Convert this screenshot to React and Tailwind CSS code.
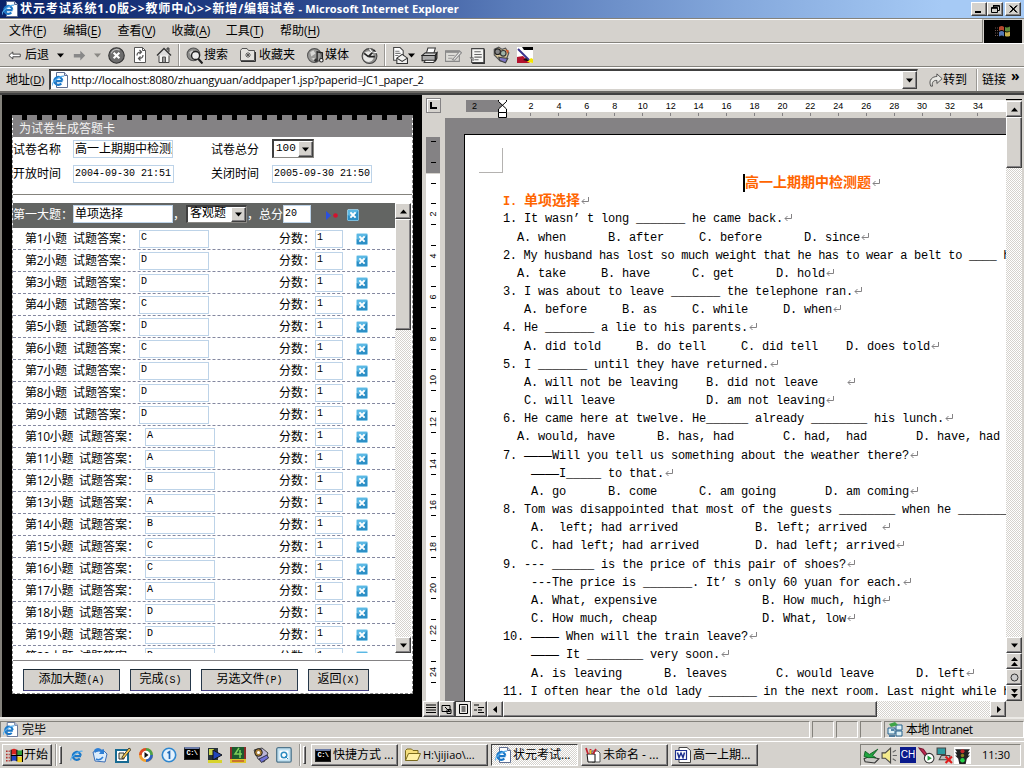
import React from "react";

const RAISED = "border border-t-white border-l-white border-r-[#404040] border-b-[#404040] bg-[#d5d2cd] shadow-[inset_-1px_-1px_0_#848284]";
const TRACK = "bg-[repeating-conic-gradient(#ffffff_0_25%,#d5d2cd_0_50%)] bg-[length:2px_2px]";
const SONG = "font-['Liberation_Mono','Noto_Sans_CJK_SC',monospace]";

function Icon({ s = 16, className = "", children }) {
  return (
    <svg width={s} height={s} viewBox="0 0 16 16" className={"shrink-0 " + className}>
      {children}
    </svg>
  );
}

function Tri({ dir = "down", color = "#000" }) {
  const d = { down: "M0 0h7L3.5 4z", up: "M0 4h7L3.5 0z", left: "M5 0v7L1 3.5z", right: "M2 0v7L6 3.5z" }[dir];
  return (
    <svg width="7" height="7" viewBox={dir === "down" || dir === "up" ? "0 -1.5 7 7" : "0 0 7 7"} className="shrink-0">
      <path d={d} fill={color} />
    </svg>
  );
}

function EMark() {
  return (
    <g fill="none">
      <path d="M12 9.2H5.2M11.8 8.6a4 4 0 1 0-1 3" stroke="#1b78c8" strokeWidth="2.2" />
      <path d="M2 13.5C.5 11 9 3.5 13.6 4.2" stroke="#5ab0ee" strokeWidth="1.1" />
    </g>
  );
}

function IEPage({ s = 16 }) {
  return (
    <Icon s={s}>
      <path d="M4.5.5h8l3 3v12h-11z" fill="#fff" stroke="#5f6f92" />
      <path d="M12.5.5v3h3" fill="#cfdcf4" stroke="#5f6f92" />
      <g transform="translate(-1.5 0)"><EMark /></g>
    </Icon>
  );
}

function Sep({ className = "" }) {
  return <div className={"h-[22px] w-[2px] shrink-0 border-l border-r border-l-[#9a9894] border-r-white " + className} />;
}

function TitleBar() {
  return (
    <header className="flex h-[18px] shrink-0 items-center bg-[linear-gradient(90deg,#0a246a_0%,#264288_28%,#5a7cba_50%,#84a8dc_72%,#a6caf5_92%)] pl-[2px] pr-[3px]">
      <IEPage />
      <div className="ml-[2px] w-[470px] whitespace-nowrap font-['Noto_Sans','Noto_Sans_CJK_SC',sans-serif] text-[12px] font-bold leading-[18px] text-white">
        <span className="tracking-[0.88px]">状元考试系统1.0版&gt;&gt;教师中心&gt;&gt;新增/编辑试卷</span>
        <span className="text-[11px] tracking-[0.13px]"> - Microsoft Internet Explorer</span>
      </div>
      <div className="ml-auto flex">
        {["M3 10.5h6M3 9.5h6", "M5.5 3.5h6v5h-2M5.5 3v2M5.5 4.2h6M3.5 5.5h6v5h-6zM3.5 6.3h6", "M3.5 3.5l7 7M10.5 3.5l-7 7M4.3 3.5l7 7M11.3 3.5l-7 7"].map((d, i) => (
          <div key={i} className={"flex h-[14px] w-[16px] items-center justify-center " + RAISED + (i === 2 ? " ml-[2px]" : "")}>
            <svg width="14" height="12" viewBox="0 1 14 12"><path d={d} stroke="#000" fill="none" /></svg>
          </div>
        ))}
      </div>
    </header>
  );
}

function MenuBar() {
  const items = [["文件", "F"], ["编辑", "E"], ["查看", "V"], ["收藏", "A"], ["工具", "T"], ["帮助", "H"]];
  return (
    <nav className="flex h-[25px] shrink-0 border-t border-[#84827c]">
      <div className="flex flex-1 items-center border-b border-r border-t border-b-[#84827c] border-r-[#84827c] border-t-white pl-[9px]">
        {items.map(([t, k]) => (
          <div key={k} className="w-[54.2px] whitespace-nowrap">
            {t}<span className="text-[12px]">(<u className="underline-offset-[2px]">{k}</u>)</span>
          </div>
        ))}
      </div>
      <div className="ml-px mr-[2px] mt-px flex w-[38px] items-center justify-center bg-black">
        <svg width="18" height="16" viewBox="0 0 18 16">
          <path d="M5 3q3-2 5 0v4q-2-2-5 0z" fill="#b5482e" />
          <path d="M11 3q2 1 5-.5V7q-3 1-5 0z" fill="#5d8a3c" />
          <path d="M5 8q3-2 5 0v4.500q-2-2-5 0z" fill="#5577b4" />
          <path d="M11 8q2 1 5-.5V12q-3 1-5 0z" fill="#c9b04b" />
          <path d="M1 4h3M1 6.500h3M1 9h3M1 11.500h3" stroke="#6b5550" strokeDasharray="1 1" />
        </svg>
      </div>
    </nav>
  );
}

function Toolbar() {
  return (
    <div className="flex h-[24px] shrink-0 items-center border-b border-t border-b-[#84827c] border-t-white pl-[8px] pr-[2px]">
      <Icon s={14}><path d="M1 8.500l4.500-4v2.500H14v3H5.500v2.500z" fill="#fff" stroke="#333" /></Icon>
      <span className="ml-[3px] w-[24px]">后退</span>
      <div className="ml-[8px]"><Tri /></div>
      <Icon s={13} className="ml-[9px]"><path d="M15 8l-6-6v4H1v4.500h8V14z" fill="#888" /></Icon>
      <div className="ml-[8px]"><Tri color="#8a8884" /></div>
      <Icon s={17} className="ml-[7px]">
        <circle cx="8" cy="8" r="7.300" fill="#6c6c6c" stroke="#333" />
        <path d="M3 6a5.500 5.500 0 0 1 8-3" stroke="#bbb" fill="none" />
        <path d="M5.300 5.300l5.400 5.400M10.700 5.300l-5.400 5.400" stroke="#fff" strokeWidth="2" />
      </Icon>
      <Icon className="ml-[7px]">
        <path d="M2.500.5h8l3 3v12h-11z" fill="#fff" stroke="#555" /><path d="M10.500.5v3h3" stroke="#555" fill="none" />
        <path d="M5 8.500C5 5.500 7 5 9 5M7.500 3l2 2-2 2M11 8c0 3-2 3.500-4 3.500M8.500 9.500l-2 2 2 2" stroke="#555" strokeWidth="1.200" fill="none" />
      </Icon>
      <Icon className="ml-[8px]">
        <path d="M11 3V1h2v4" fill="#777" stroke="#444" /><path d="M3 8v7.500h10V8" fill="#f4f4f2" stroke="#444" />
        <path d="M1 8.500l7-7 7 7" fill="#ddd" stroke="#333" strokeWidth="1.400" /><path d="M6.500 15v-5h3v5" fill="#999" stroke="#555" />
      </Icon>
      <Sep className="ml-[6px]" />
      <Icon s={17} className="ml-[6px]">
        <circle cx="7" cy="7" r="6" fill="#8d8d8b" stroke="#555" /><path d="M3 5l3-2 2 3-3 3z" fill="#ccc" />
        <circle cx="9" cy="8" r="3.800" fill="#ececec" stroke="#222" strokeWidth="1.300" /><path d="M11.500 11l4 4.500" stroke="#222" strokeWidth="2" />
      </Icon>
      <span className="ml-px w-[24px]">搜索</span>
      <Icon className="ml-[12px]">
        <path d="M.5 13.500v-10l1.500-2h5l1.500 2h6v10z" fill="#e3e2de" stroke="#555" /><path d="M1 14.500h14.500V5" stroke="#333" fill="none" />
        <path d="M8 5v6M5 8h6M6 6l4 4M10 6l-4 4" stroke="#555" strokeWidth=".9" />
      </Icon>
      <span className="ml-[3px] w-[36px]">收藏夹</span>
      <Icon s={17} className="ml-[12px]">
        <circle cx="7" cy="8" r="6.500" fill="#9a9a98" stroke="#555" /><path d="M3 5l3-2 2 3-4 3zM4 11l3-1 1 3z" fill="#d8d8d6" />
        <path d="M9.500 12V4.500l5 1V12" stroke="#222" fill="none" strokeWidth="1.200" /><circle cx="8.500" cy="12.500" r="1.700" fill="#333" /><circle cx="13.500" cy="12.500" r="1.700" fill="#fff" stroke="#222" />
      </Icon>
      <span className="ml-px w-[24px]">媒体</span>
      <Icon s={17} className="ml-[12px]">
        <circle cx="8" cy="8.500" r="7" fill="#8f8f8d" stroke="#444" /><circle cx="7" cy="9" r="5" fill="#e8e8e6" />
        <path d="M7 9l6-6M7 9h6M7 9L3 6" stroke="#222" strokeWidth="1.600" /><path d="M8 1.500l2 3 5 1" stroke="#fff" fill="none" />
      </Icon>
      <Sep className="ml-[6px]" />
      <Icon s={17} className="ml-[5px]">
        <path d="M2.500.5h6l3 3v9h-9z" fill="#fff" stroke="#444" /><path d="M4 4h4M4 6h5M4 8h3" stroke="#777" />
        <path d="M5.500 10.500l5-3.500 5 3.500v5h-10z" fill="#f2f2f0" stroke="#333" /><path d="M5.500 10.500l5 3 5-3" fill="none" stroke="#333" />
      </Icon>
      <div><Tri /></div>
      <Icon s={17} className="ml-[6px]">
        <path d="M5 6l1.500-5h7L12 6" fill="#fff" stroke="#333" /><path d="M1 8l3-2.500h11L13.500 8z" fill="#ccc" stroke="#333" />
        <path d="M1 8h12.500v5H1z" fill="#aaa" stroke="#222" /><path d="M13.500 8L15 5.500v5l-1.500 3z" fill="#666" stroke="#222" /><path d="M3 14.500h9l1-2H4z" fill="#fff" stroke="#333" />
      </Icon>
      <Icon s={17} className="ml-[7px]">
        <path d="M.5 3.500h13v10H.5z" fill="#dcdbd7" stroke="#888" /><path d="M1 4.500h12" stroke="#8a8a8a" strokeWidth="2" />
        <path d="M3 8h6M3 10.500h4" stroke="#999" /><path d="M7 12l7-8 1.500 1.500-6.500 7z" fill="#eee" stroke="#888" />
      </Icon>
      <Icon s={17} className="ml-[7px]">
        <path d="M2.500 1.500h11.500v13H2.500z" fill="#f6f6f4" stroke="#444" /><path d="M14.500 2v13.500H3" stroke="#333" fill="none" /><path d="M5 4.500h6M5 7h7M5 9.500h7M5 12h4" stroke="#666" />
        <path d="M1 10h3v3z" fill="#bbb" stroke="#555" strokeWidth=".6" />
      </Icon>
      <Icon s={18} className="ml-[6px]">
        <path d="M2 3l4-2 3 2 3-1 3 4-3 8-5-1-5-5z" fill="#d8c79a" stroke="#555" /><circle cx="5" cy="5" r="2.500" fill="#888" stroke="#222" /><circle cx="10" cy="6.500" r="2.500" fill="#9fb3a8" stroke="#333" />
        <path d="M6 10l8 1-2 4-5-2z" fill="#7f76c8" stroke="#444" /><path d="M12 3l3 1-1 3z" fill="#d4582f" />
      </Icon>
      <Icon s={16} className="ml-[7px]">
        <rect width="16" height="16" fill="#fff" /><path d="M5 0h11v3H7z" fill="#000" /><path d="M0 10l6-1 7 7H0z" fill="#b3122e" />
        <path d="M1 2l12 12" stroke="#39348f" strokeWidth="2" /><path d="M10 15l4-4 2 1v4z" fill="#f5e600" /><path d="M9 11l3 3h-2l-4-1z" fill="#111" />
      </Icon>
    </div>
  );
}

function AddressBar() {
  return (
    <div className="flex h-[26px] shrink-0 items-center border-b-2 border-t border-b-[#6a6864] border-t-white pl-[6px] pr-[2px]">
      <span className="w-[43px] whitespace-nowrap">地址<span className="text-[11px]">(<u>D</u>)</span></span>
      <div className="flex h-[21px] w-[869px] items-center border-2 border-b border-r border-b-[#d5d2cd] border-l-[#404040] border-r-[#d5d2cd] border-t-[#404040] bg-white pl-px">
        <IEPage />
        <span className="ml-[3px] flex-1 whitespace-nowrap text-[11px] tracking-[-0.17px]">http://localhost:8080/zhuangyuan/addpaper1.jsp?paperid=JC1_paper_2</span>
        <div className={"flex h-[18px] w-[15px] items-center justify-center " + RAISED}><Tri /></div>
      </div>
      <Icon s={14} className="ml-[11px]">
        <path d="M2 15C-1 8 4 4 9 4V1l6 5.500L9 12V8.500C5 8 3 11 4 15z" fill="#e8e8e4" stroke="#444" />
      </Icon>
      <span className="w-[26px]">转到</span>
      <Sep className="ml-[7px]" />
      <span className="ml-[4px]">链接</span>
      <span className="ml-[5px] -translate-y-[4px] text-[14px] font-bold leading-none">»</span>
    </div>
  );
}

function DeleteIcon({ s = 12 }) {
  return (
    <Icon s={s}>
      <rect x=".5" y=".5" width="15" height="15" rx="2" fill="#5bb8e4" stroke="#b6e0f4" />
      <path d="M1 15V8q7 4 14-6v13z" fill="#2c8fc6" />
      <path d="M4.500 4.500l7 7M11.500 4.500l-7 7" stroke="#fff" strokeWidth="2.600" />
    </Icon>
  );
}

const FIELD = "h-[18px] shrink-0 overflow-hidden whitespace-nowrap border border-[#bdd3e8] bg-white text-black ";

function Question({ n, a }) {
  return (
    <div className="flex h-[22px] items-center border-b border-dashed border-[#8488a0] pl-[12px]">
      <span className={n > 9 ? "w-[54px] tracking-[-0.3px]" : "w-[48px] tracking-[-0.3px]"}>第{n}小题</span>
      <span className="w-[66px] whitespace-nowrap">试题答案：</span>
      <div className={FIELD + SONG + " w-[70px] pl-px text-[10px] leading-[14px]"}>{a}</div>
      <span className={(n > 9 ? "ml-[64px]" : "ml-[70px]") + " w-[36px] whitespace-nowrap"}>分数：</span>
      <div className={FIELD + SONG + " w-[28px] pl-px text-[10px] leading-[14px]"}>1</div>
      <div className="ml-[13px]"><DeleteIcon /></div>
    </div>
  );
}

function Select({ children, w, arrowH }) {
  return (
    <div className={"flex items-start border-2 border-b border-r border-b-[#8a8884] border-l-[#404040] border-r-[#8a8884] border-t-[#404040] bg-white text-black " + SONG + " " + w}>
      <span className="flex-1 whitespace-nowrap pl-[2px] leading-[14px]">{children}</span>
      <div className={"flex w-[15px] items-center justify-center " + arrowH + " " + RAISED}><Tri /></div>
    </div>
  );
}

const ANSWERS = "CDDCDCDDDAABABCCADDD".split("");

function AnswerCard() {
  return (
    <section className="w-[422px] shrink-0 border-l-2 border-[#84827c] bg-black pl-[10px] pt-[20px]">
      <div className="flex h-[579px] w-[401px] flex-col border border-t-0 border-dashed border-[#8a8a8a] bg-white">
        <div className="h-[5px] shrink-0 bg-[repeating-linear-gradient(90deg,#848284_0_9px,#000_9px_14px,#848284_14px_15px)]" />
        <div className="h-[17px] shrink-0 bg-[#848284] pl-[6px] leading-[17px] text-[#f3f3f3]">为试卷生成答题卡</div>
        <div className="grid shrink-0 grid-cols-[60px_138px_61px_1fr] pt-[3px]">
          <span className="h-[19px] pt-[2px]">试卷名称</span>
          <div className={FIELD + "w-[100px] pl-px leading-[15px]"}>高一上期期中检测题</div>
          <span className="pt-[2px]">试卷总分</span>
          <div className="-mt-px h-[19px]"><Select w="w-[42px] h-[19px]" arrowH="h-[16px]"><span className="text-[11px]">100</span></Select></div>
          <span className="pt-[7px]">开放时间</span>
          <div className={FIELD + SONG + " mt-[6px] w-[101px] pl-px text-[10px] leading-[16px]"}>2004-09-30 21:51</div>
          <span className="pt-[7px]">关闭时间</span>
          <div className={FIELD + SONG + " mt-[6px] w-[100px] pl-px text-[10px] leading-[16px]"}>2005-09-30 21:50</div>
        </div>
        <div className="mt-[11px] h-[2px] shrink-0 border-t border-[#84827c]" />
        <div className="mt-[7px] flex h-[450px] shrink-0">
          <div className="w-[382px] shrink-0 overflow-hidden">
            <div className="flex h-[25px] bg-[#636563] pt-[2px] text-white">
              <span className="w-[60px] whitespace-nowrap pt-[2px]">第一大题：</span>
              <div className={FIELD + "w-[100px] pl-px leading-[15px]"}>单项选择</div>
              <span className="w-[13px] pt-[2px]">，</span>
              <Select w="w-[61px] h-[18px]" arrowH="h-[15px]"><span className="text-[12px]">客观题</span></Select>
              <span className="w-[12px] pt-[2px]">，</span>
              <span className="w-[24px] pt-[2px]">总分</span>
              <div className={FIELD + SONG + " w-[28px] pl-px text-[10px] leading-[15px]"}>20</div>
              <svg width="13" height="9" viewBox="0 0 13 9" className="ml-[14px] mt-[6px] shrink-0"><path d="M1 0l5 4.500L1 9z" fill="#2a4fe0" /><circle cx="10.500" cy="4.500" r="2.300" fill="#d3122e" /></svg>
              <div className="ml-[9px] mt-[4px]"><DeleteIcon /></div>
            </div>
            {ANSWERS.map((a, i) => <Question key={i} n={i + 1} a={a} />)}
          </div>
          <div className={"flex w-[16px] flex-col " + TRACK}>
            <div className={"flex h-[16px] items-center justify-center " + RAISED}><Tri dir="up" /></div>
            <div className={"h-[111px] " + RAISED} />
            <div className={"mt-auto flex h-[16px] items-center justify-center " + RAISED}><Tri /></div>
          </div>
        </div>
        <div className="mt-[7px] h-px shrink-0 bg-[#848284]" />
        <div className="mt-[8px] flex gap-[10px] pl-[10px]">
          {[["添加大题", "A", "w-[97px]"], ["完成", "S", "w-[61px]"], ["另选文件", "P", "w-[97px]"], ["返回", "X", "w-[61px]"]].map(([t, k, w]) => (
            <button key={k} className={"h-[22px] whitespace-nowrap border border-b-[#4a4488] border-l-[#26384a] border-r-[#26384a] border-t-[#1c2a35] bg-[#d5d2cd] pb-[2px] text-[12px] leading-[18px] text-black " + w}>
              {t}<span className={SONG + " text-[10px]"}>({k})</span>
            </button>
          ))}
        </div>
      </div>
    </section>
  );
}

const LINES = [
  "1. It wasn’ t long _______ he came back.↵",
  "  A. when      B. after     C. before      D. since↵",
  "~2. My husband has lost so much weight that he has to wear a belt to ____ h",
  "  A. take     B. have      C. get      D. hold↵",
  "3. I was about to leave _______ the telephone ran.↵",
  "   A. before     B. as     C. while     D. when↵",
  "4. He _______ a lie to his parents.↵",
  "   A. did told     B. do tell     C. did tell    D. does told↵",
  "5. I _______ until they have returned.↵",
  "   A. will not be leaving    B. did not leave    ↵",
  "   C. will leave             D. am not leaving↵",
  "6. He came here at twelve. He______ already ________ his lunch.↵",
  "  A. would, have      B. has, had       C. had,  had       D. have, had",
  "7. ——Will you tell us something about the weather there?↵",
  "    ——I_____ to that.↵",
  "    A. go      B. come      C. am going       D. am coming↵",
  "8. Tom was disappointed that most of the guests ________ when he ________",
  "    A.  left; had arrived           B. left; arrived  ↵",
  "    C. had left; had arrived        D. had left; arrived↵",
  "9. --- ______ is the price of this pair of shoes?↵",
  "    ---The price is _______. It’ s only 60 yuan for each.↵",
  "    A. What, expensive               B. How much, high↵",
  "    C. How much, cheap               D. What, low↵",
  "10. —— When will the train leave?↵",
  "    —— It ________ very soon.↵",
  "    A. is leaving      B. leaves       C. would leave      D. left↵",
  "~11. I often hear the old lady _______ in the next room. Last night while h",
];

function Return() {
  return (
    <svg width="8" height="8" viewBox="0 0 8 8" className="ml-px inline-block align-[0px]">
      <path d="M7.500 0v4.500H1M3.500 2L1 4.500 3.500 7" fill="none" stroke="#848284" />
    </svg>
  );
}

function Line({ text }) {
  const tight = text[0] === "~";
  const parts = text.replace("~", "").split(/(——|↵)/);
  return (
    <div className={"h-[18.18px] whitespace-pre leading-[18px] " + (tight ? "tracking-[-0.35px]" : "tracking-[-0.201px]")}>
      {parts.map((p, i) =>
        p === "↵" ? <Return key={i} /> :
        p === "——" ? <span key={i} className="inline-block w-[28px] align-top font-['Liberation_Sans'] text-[14px] leading-[17px] tracking-normal">——</span> : p
      )}
    </div>
  );
}

function HRuler() {
  const nums = Array.from({ length: 17 }, (_, i) => (i + 1) * 2);
  return (
    <div className="flex h-[23px] pt-[3px]">
      <div className="ml-[3px] flex h-[15px] w-[15px] items-center justify-center border border-[#848284] shadow-[inset_1px_1px_0_#fff]">
        <svg width="7" height="7"><path d="M1 0v6h6" stroke="#000" strokeWidth="2" fill="none" /></svg>
      </div>
      <div className="ml-[25px] mt-[2px] flex h-[20px] flex-1 overflow-hidden text-[9px] leading-[12px]">
        <div className="h-[12px] w-[36px] bg-[#848284] pl-[6px]">2</div>
        <div className="relative h-[12px] flex-1 bg-white pl-[15px]">
          <svg width="9" height="22" viewBox="0 0 9 22" className="absolute -left-[4px] -top-[2px]">
            <path d="M.5.5h8v3L.5 11v3.500h8V11L.5 3.500z" fill="#fff" stroke="#000" /><path d="M.5 14.500h8v5h-8z" fill="#fff" stroke="#000" />
          </svg>
          <div className="flex">
            {nums.map((n) => (
              <div key={n} className="flex w-[27.95px] shrink-0 flex-col items-center">
                <span>{n}</span><span className="mt-[1px] h-[3px] w-px bg-[#848284]" />
              </div>
            ))}
          </div>
        </div>
      </div>
    </div>
  );
}

function VRuler() {
  const nums = Array.from({ length: 12 }, (_, i) => (i + 1) * 2);
  return (
    <div className="w-[22px] shrink-0 overflow-hidden pl-[3px] pt-[19px]">
      <div className="flex h-[36px] w-[14px] flex-col items-center gap-[20px] bg-[#848284] pt-[4px]">
        <i className="h-px w-[5px] bg-black" /><i className="h-px w-[5px] bg-black" />
      </div>
      <div className="mt-px flex h-[529px] w-[14px] flex-col items-center bg-white pt-[9px] text-[9px]">
        <i className="mb-[19px] h-px w-[5px] shrink-0 bg-black" />
        {nums.map((n) => (
          <div key={n} className="flex h-[41.6px] shrink-0 flex-col items-center">
            <i className="h-px w-[5px] bg-black" />
            <span className="flex h-[20px] w-[14px] -rotate-90 items-center justify-center leading-none">{n}</span>
            <i className="h-px w-[5px] bg-black" />
          </div>
        ))}
      </div>
    </div>
  );
}

function SideBtn({ children, h = "h-[16px]" }) {
  return <div className={"flex w-[16px] shrink-0 items-center justify-center " + h + " " + RAISED}>{children}</div>;
}

function WordPane() {
  return (
    <section className="flex min-w-0 flex-1 bg-[#d5d2cd] pl-px">
      <div className="flex w-[583px] shrink-0 flex-col font-['Liberation_Sans',sans-serif]">
        <HRuler />
        <div className="flex h-[584px] overflow-hidden">
          <VRuler />
          <div className="min-w-0 flex-1 overflow-hidden bg-[#848284] pl-[19px] pt-[16px]">
            <div className="h-[568px] border-l border-t border-black bg-white pl-[14px] pt-[13px]">
              <div className="mb-px h-[25px] w-[24px] border-b border-r border-[#b4b2b0]" />
              <div className={"w-[800px] pl-[24px] text-[12px] " + SONG}>
                <div className="flex h-[18.180px] items-center whitespace-nowrap pl-[240px] text-[14px] font-bold text-[#ff6500]">
                  <span className="h-[18px] w-[2px] bg-black" />高一上期期中检测题<Return />
                </div>
                <div className="h-[18.180px] whitespace-pre text-[14px] font-bold leading-[18px] tracking-[0px] text-[#ff6500]">
                  <span className="text-[12px] tracking-[-0.2px]">I. </span>单项选择<Return />
                </div>
                {LINES.map((l, i) => <Line key={i} text={l} />)}
              </div>
            </div>
          </div>
        </div>
        <div className="flex h-[16px]">
          {["M1 2h10M1 4.500h10M1 7h10M1 9.500h10", "M1 2.500h8v6H1zM6 6.500h4v4H6zM4 4l4 4", "M2.500 1.500h8v9h-8zM4.500 4h4M4.500 6h4M4.500 8h4", "M1 2h5M5 4.500h6M1 7h3M5 7h4M5 9.500h6"].map((d, i) => (
            <div key={i} className={"flex w-[16px] items-center justify-center " + (i === 2 ? "border border-[#404040] bg-[#eeece8]" : RAISED)}>
              <svg width="12" height="12" className="shrink-0"><path d={d} stroke="#000" fill="none" /></svg>
            </div>
          ))}
          <SideBtn><Tri dir="left" /></SideBtn>
          <div className={"w-[374px] " + RAISED} />
          <div className={"flex-1 " + TRACK} />
          <SideBtn><Tri dir="right" /></SideBtn>
        </div>
      </div>
      <div className="flex w-[16px] flex-col">
        <div className="h-[5px] border-b border-black" />
        <SideBtn h="h-[16px] mt-px"><Tri dir="up" /></SideBtn>
        <div className={"h-[51px] shrink-0 " + RAISED} />
        <div className={"flex-1 " + TRACK} />
        <SideBtn><Tri /></SideBtn>
        <SideBtn><svg width="7" height="9"><path d="M0 4h7L3.500 0zM0 9h7L3.500 5z" /></svg></SideBtn>
        <SideBtn><svg width="9" height="9"><circle cx="4.500" cy="4.500" r="3.500" fill="#ccc" stroke="#333" /></svg></SideBtn>
        <SideBtn><svg width="7" height="9"><path d="M0 0h7L3.500 4zM0 5h7L3.500 9z" /></svg></SideBtn>
        <div className="h-[16px]" />
      </div>
    </section>
  );
}

const SUNK = "border border-b-white border-l-[#84827c] border-r-white border-t-[#84827c]";

function StatusBar() {
  return (
    <div className="flex h-[24px] shrink-0 gap-[2px] border-t-2 border-t-[#eceae6] pb-[3px] pt-[2px]">
      <div className={"flex w-[810px] items-center pl-[2px] " + SUNK}><IEPage s={15} /><span className="ml-[4px]">完毕</span></div>
      <div className={"w-[22px] " + SUNK} /><div className={"w-[22px] " + SUNK} /><div className={"w-[22px] " + SUNK} />
      <div className={"flex flex-1 items-center whitespace-nowrap pl-[2px] " + SUNK}>
        <Icon s={16}>
          <path d="M1 6h7v6H1zM9 3h6v5H9zM9 9h6v5H9z" fill="#dff1f5" stroke="#27638f" /><path d="M2 2l6-2 3 3-7 2z" fill="#3fa447" /><path d="M2 14h6M4 8h3" stroke="#27638f" strokeWidth="1.500" />
        </Icon>
        <span className="ml-[3px] tracking-[-0.5px]">本地 Intranet</span>
      </div>
    </div>
  );
}

function WinFlag() {
  return (
    <Icon s={17}>
      <path d="M5 2.500q2.500-1.500 5 0v5q-2.500-1.500-5 0z" fill="#d8231f" /><path d="M10.500 2.800q2.500 1.200 5 0v5q-2.500 1.200-5 0z" fill="#2f9e3a" />
      <path d="M5 8.500q2.500-1.500 5 0v5q-2.500-1.500-5 0z" fill="#1e43c4" /><path d="M10.500 8.800q2.500 1.200 5 0v5q-2.500 1.200-5 0z" fill="#f0cf1d" />
      <path d="M10.200 2.500v11M5 8h10.500M4.800 2.500v11M15.500 2.500v11.500" stroke="#000" fill="none" /><path d="M0 4h3.500M0 7h3.500M0 10h3.500M0 13h3.500" stroke="#b0302a" strokeWidth="1.500" strokeDasharray="1.500 1" />
    </Icon>
  );
}

function CmdIcon({ className = "" }) {
  return (
    <div className={"h-[13px] w-[16px] shrink-0 overflow-hidden border border-t-2 border-[#222] border-t-[#6b7ca8] bg-black text-center font-['Liberation_Mono',monospace] text-[7px] font-bold leading-[9px] tracking-[-0.500px] text-white " + className}>C:\</div>
  );
}

function Task({ icon, active, children }) {
  return (
    <div className={"flex h-[22px] w-[87px] shrink-0 items-center overflow-hidden whitespace-nowrap pl-[3px] " + (active ? "border border-b-white border-l-[#404040] border-r-white border-t-[#404040] " + TRACK : RAISED)}>
      {icon}<span className="ml-[2px]">{children}</span>
    </div>
  );
}

function Taskbar() {
  return (
    <footer className="flex h-[27px] shrink-0 items-center border-t border-white pl-[2px] pr-[3px]">
      <div className={"flex h-[22px] w-[50px] items-center whitespace-nowrap pl-[3px] " + RAISED}><WinFlag /><span className="ml-px">开始</span></div>
      <Sep className="ml-[3px]" /><div className={"ml-[2px] h-[18px] w-[3px] " + RAISED} />
      <div className="ml-[7px] flex w-[230px] items-center gap-[7px]">
        <Icon><EMark /></Icon>
        <Icon><path d="M1 5l10-2 4 4-2 8-10-1z" fill="#dcecfb" stroke="#3d6fb5" /><path d="M2 3q4-4 8 0l2-1v5H7l1.500-2Q6 3 3 6z" fill="#2d7fd6" /><path d="M4 12q4 2 7-2" stroke="#2d7fd6" strokeWidth="1.500" fill="none" /></Icon>
        <Icon><path d="M1 3h12v12H1z" fill="#fff" stroke="#176a92" strokeWidth="2" /><path d="M4 6h5v6H4z" fill="#e9e3c1" stroke="#333" /><path d="M7 10l7-9 2 1.500-7 8.500-2 .5z" fill="#f3c64b" stroke="#222" strokeWidth=".8" /></Icon>
        <Icon><circle cx="8" cy="8" r="7" fill="#f2a02c" /><path d="M8 1a7 7 0 0 1 7 7H8z" fill="#4ba14c" /><path d="M15 8a7 7 0 0 1-7 7V8z" fill="#2f63be" /><path d="M1 8a7 7 0 0 1 7-7v7z" fill="#da4a27" /><circle cx="8" cy="8" r="4.200" fill="#fff" /><path d="M6.500 5l4 3-4 3z" fill="#111" /></Icon>
        <Icon><circle cx="8" cy="8" r="6.700" fill="#e4f2fd" stroke="#2f87cf" strokeWidth="1.600" /><path d="M6.500 6L8.500 4.800V12" stroke="#1f6ab8" strokeWidth="1.700" fill="none" /></Icon>
        <CmdIcon className="-mt-[3px]" />
        <Icon><path d="M1 1h10v14H1z" fill="#27323a" /><path d="M2 2h5v6H2z" fill="#c8d44a" /><path d="M6 3l9 5-9 5z" fill="#2145b8" stroke="#111" /><path d="M1 13h14v3H1z" fill="#d8d32c" /></Icon>
        <Icon><path d="M0 0h16v12H0z" fill="#1c5b2e" /><path d="M1 0v12M15 0v12" stroke="#8d2a2a" strokeWidth="2" /><path d="M9 1L5 7h7M10 3v8" stroke="#7fd05a" strokeWidth="1.500" fill="none" /><path d="M0 12h16v4H0z" fill="#e0c62a" /><path d="M2 14h12" stroke="#b5252f" /></Icon>
        <Icon><path d="M1 3l8-2 6 5-4 9-6-3z" fill="#b9b4d6" stroke="#444" /><circle cx="5.500" cy="5.500" r="3.800" fill="#a87d34" stroke="#222" /><circle cx="5.500" cy="5.500" r="1.500" fill="#fff" /><path d="M6 12l8-4 1.500 3-7 4.500z" fill="#6f72d8" stroke="#334" /></Icon>
        <Icon><rect x=".7" y=".7" width="14.500" height="14.500" rx="1.500" fill="#bfe0f1" stroke="#51768c" strokeWidth="1.300" /><path d="M3.500 3.500h9v9h-9z" fill="#fff" /><circle cx="8" cy="8" r="2.800" fill="none" stroke="#2f8cc0" strokeWidth="1.500" /><path d="M9 9l3 3" stroke="#2f8cc0" /></Icon>
      </div>
      <Sep /><div className={"ml-[2px] h-[18px] w-[3px] " + RAISED} />
      <div className="ml-[5px] flex gap-[3px]">
        <Task icon={<CmdIcon />}>快捷方式 ...</Task>
        <Task icon={<Icon><path d="M.5 13.500v-10L2 2h4.500L8 3.500h5v3" fill="#f5df7d" stroke="#7a6a1d" /><path d="M.5 13.500l3-7h12l-3 7z" fill="#fff1a6" stroke="#7a6a1d" /></Icon>}><span className="text-[11px]">H:\jijiao\...</span></Task>
        <Task active icon={<IEPage />}>状元考试...</Task>
        <Task icon={<Icon><path d="M7 4h6l2 2v9H7z" fill="#fff" stroke="#555" /><path d="M2 7h8v8H3z" fill="#fff" stroke="#111" /><path d="M3 7L1 1M5.500 7V2M8 7l3-5" stroke="#c3202f" strokeWidth="1.800" /><path d="M5.500 7V3" stroke="#e5c322" strokeWidth="1.500" /></Icon>}>未命名 - ...</Task>
        <Task icon={<Icon><path d="M4 .5h8l3.500 3v12H4z" fill="#fff" stroke="#444" /><path d="M.5 3.500h11v9H.5z" fill="#fff" stroke="#1c2f8e" strokeWidth="1.200" /><path d="M2.500 5.500l1.500 5 2-4.500 2 4.500 1.500-5" stroke="#1c2f8e" strokeWidth="1.500" fill="none" /></Icon>}>高一上期...</Task>
      </div>
      <div className={"ml-auto flex h-[22px] w-[161px] items-center gap-px pl-[2px] " + SUNK}>
        <Icon s={17}><path d="M1 11l5-2 9 2-4 4-9-1z" fill="#c9c9c5" stroke="#333" /><path d="M2 4l4 3 8-5-5 6 3 2H5L1 9z" fill="#21a541" stroke="#0d5a20" strokeWidth=".8" /></Icon>
        <Icon s={17}><path d="M1 5.500h3L9 1v14L4 10.500H1z" fill="#f4ea8c" stroke="#444" /><path d="M11 5l3-2M11 8h4M11 11l3 2" stroke="#666" /></Icon>
        <div className="ml-px h-[16px] w-[16px] shrink-0 bg-[#0a1a8c] text-center font-['Liberation_Sans',sans-serif] text-[10px] leading-[16px] text-white">CH</div>
        <Icon s={17} className="ml-px"><path d="M1 1l4 1 5 7-2 1z" fill="#c22a50" stroke="#7c1733" /><circle cx="10.500" cy="10.500" r="4.500" fill="#fff" stroke="#333" /><path d="M9 8l4 2.500L9 13z" fill="#1e9c3c" /></Icon>
        <Icon s={17}><path d="M1 1h8v6H1z" fill="#2d9aa0" stroke="#444" /><path d="M5 8h8v4H3z" fill="#bbb" stroke="#444" /><path d="M9 9l6 6M15 9l-6 6" stroke="#e01b1b" strokeWidth="2" /></Icon>
        <Icon s={17}><rect width="16" height="16" fill="#fff" /><path d="M1 2h14l-2 3h2l-2 3h2l-3 3-1 5H5l-1-5-3-3h2L1 5h2z" fill="#222" /><circle cx="8" cy="4" r="1.900" fill="#c3272c" /><circle cx="8" cy="8" r="1.600" fill="#8a7d1e" /><circle cx="8" cy="12.500" r="2.100" fill="#25d247" /></Icon>
        <span className="ml-[10px] text-[11px]">11:30</span>
      </div>
    </footer>
  );
}

export default function App() {
  return (
    <div className="flex h-[768px] w-[1024px] cursor-default select-none flex-col overflow-hidden bg-[#d5d2cd] font-['Open_Sans','Noto_Sans_CJK_SC',sans-serif] text-[12px] leading-[16px] text-black">
      <TitleBar />
      <MenuBar />
      <Toolbar />
      <AddressBar />
      <main className="flex h-[624px] shrink-0 border-t-2 border-[#404040]">
        <AnswerCard />
        <WordPane />
      </main>
      <StatusBar />
      <Taskbar />
    </div>
  );
}
